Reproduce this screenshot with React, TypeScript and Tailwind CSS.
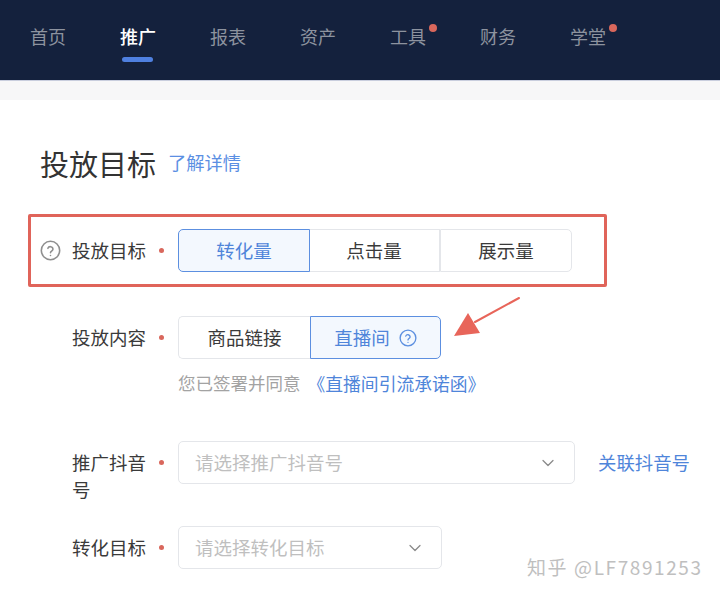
import { ChevronDown } from 'lucide-react';

const navItems = [
  { name: '首页' },
  { name: '推广', active: true },
  { name: '报表' },
  { name: '资产' },
  { name: '工具', dot: true },
  { name: '财务' },
  { name: '学堂', dot: true },
];

function HelpIcon({ size, color }: { size: number; color: string }) {
  return (
    <svg width={size} height={size} viewBox="0 0 24 24" fill="none" stroke={color} strokeWidth="1.8" strokeLinecap="round" strokeLinejoin="round">
      <circle cx="12" cy="12" r="10.5" />
      <path d="M9 9.5a3 3 0 0 1 5.8 1c0 2-2.8 2.4-2.8 4" />
      <path d="M12 17.8h.01" />
    </svg>
  );
}

function FieldLabel({ text }: { text: string }) {
  return (
    <div className="flex shrink-0 items-start">
      <div className="w-[74px] text-[18.5px] leading-[27px] text-[#3a3a3a]">{text}</div>
      <div className="ml-[13px] mt-[11px] mr-[14px] h-[5px] w-[5px] rounded-full bg-[#d9675c]" />
    </div>
  );
}

function Segment({ text, active, className, children }: { text: string; active?: boolean; className: string; children?: React.ReactNode }) {
  return (
    <div
      className={`flex h-[43px] items-center justify-center gap-[9px] border text-[18.5px] ${className} ${
        active ? 'z-10 border-[#5c8fe0] bg-[#f3f8fe] text-[#4f85da]' : 'border-[#e4e6ea] bg-white text-[#3a3a3a]'
      }`}
    >
      {text}
      {children}
    </div>
  );
}

function SelectBox({ placeholder, className }: { placeholder: string; className: string }) {
  return (
    <div className={`flex h-[43px] items-center justify-between rounded-[5px] border border-[#e4e6ea] bg-white pl-[16px] pr-[16px] ${className}`}>
      <span className="text-[18.5px] text-[#bfbfbf]">{placeholder}</span>
      <ChevronDown size={20} strokeWidth={1.5} color="#8a8a8a" />
    </div>
  );
}

export default function App() {
  return (
    <div className="relative h-[596px] w-[720px] overflow-hidden bg-white font-['Noto_Sans_CJK_SC','Liberation_Sans',sans-serif]">
      {/* Top nav */}
      <nav className="flex h-[81px] gap-[54px] border-b border-[#c9cede] bg-[#14213d] pl-[30px]">
        {navItems.map(item => (
          <div key={item.name} className="relative w-[36px] pt-[23px]">
            <div className={`text-[18px] leading-[27px] ${item.active ? 'font-medium text-white' : 'text-[#8d939f]'}`}>{item.name}</div>
            {item.active && <div className="ml-[2px] mt-[7px] h-[5px] w-[31px] rounded-full bg-[#4f80e0]" />}
            {item.dot && <div className="absolute left-[39px] top-[24px] h-[8px] w-[8px] rounded-full bg-[#d9675c]" />}
          </div>
        ))}
      </nav>
      <div className="h-[19px] bg-[#f7f7f8]" />

      {/* Title */}
      <div className="ml-[40px] mt-[43px] flex h-[40px] items-center">
        <h1 className="text-[29px] font-normal leading-[40px] text-[#333333]">投放目标</h1>
        <a className="ml-[12px] text-[18.3px] text-[#5b8fe3]">了解详情</a>
      </div>

      {/* Highlighted row */}
      <div className="ml-[28px] mt-[31px] flex h-[73px] w-[579px] items-center rounded-[2px] border-[3px] border-[#e0645a] pl-[9px]">
        <div className="mr-[11px]">
          <HelpIcon size={21} color="#8f8f8f" />
        </div>
        <FieldLabel text="投放目标" />
        <div className="flex">
          <Segment text="转化量" active className="w-[132px] rounded-l-[5px]" />
          <Segment text="点击量" className="ml-[-1px] w-[131px] border-l-0" />
          <Segment text="展示量" className="w-[132px] rounded-r-[5px]" />
        </div>
      </div>

      {/* Content */}
      <div className="ml-[72px] mt-[29px] flex items-center">
        <FieldLabel text="投放内容" />
        <div className="flex">
          <Segment text="商品链接" className="w-[132px] rounded-l-[5px] border-r-0" />
          <Segment text="直播间" active className="w-[131px] rounded-r-[5px]">
            <HelpIcon size={18} color="#5c8fe0" />
          </Segment>
        </div>
      </div>
      <div className="ml-[178px] mt-[12px] flex h-[24px] items-center text-[17.5px]">
        <span className="text-[#a3a3a3]">您已签署并同意</span>
        <a className="ml-[7px] text-[17.8px] text-[#4f85da]">《直播间引流承诺函》</a>
      </div>

      {/* Douyin account */}
      <div className="ml-[72px] mt-[46px] flex items-start">
        <div className="mt-[8px]">
          <FieldLabel text="推广抖音号" />
        </div>
        <SelectBox placeholder="请选择推广抖音号" className="w-[397px]" />
        <a className="ml-[23px] text-[18.4px] leading-[43px] text-[#4f85da]">关联抖音号</a>
      </div>

      {/* Conversion goal */}
      <div className="ml-[72px] mt-[23px] flex items-center">
        <FieldLabel text="转化目标" />
        <SelectBox placeholder="请选择转化目标" className="w-[264px]" />
      </div>

      {/* Annotation arrow */}
      <svg className="absolute left-[450px] top-[294px]" width="74" height="46" viewBox="0 0 74 46">
        <path d="M69 4 25 28" stroke="#e8655a" strokeWidth="2" strokeLinecap="round" />
        <path d="M4 42 18 19 30 39Z" fill="#e8655a" />
      </svg>

      {/* Watermark */}
      <div className="absolute left-[527px] top-[553px] whitespace-nowrap text-[19px] leading-[27px] tracking-[1.6px] text-[#b9b9b9] opacity-90">
        知乎 @LF7891253
      </div>
    </div>
  );
}
